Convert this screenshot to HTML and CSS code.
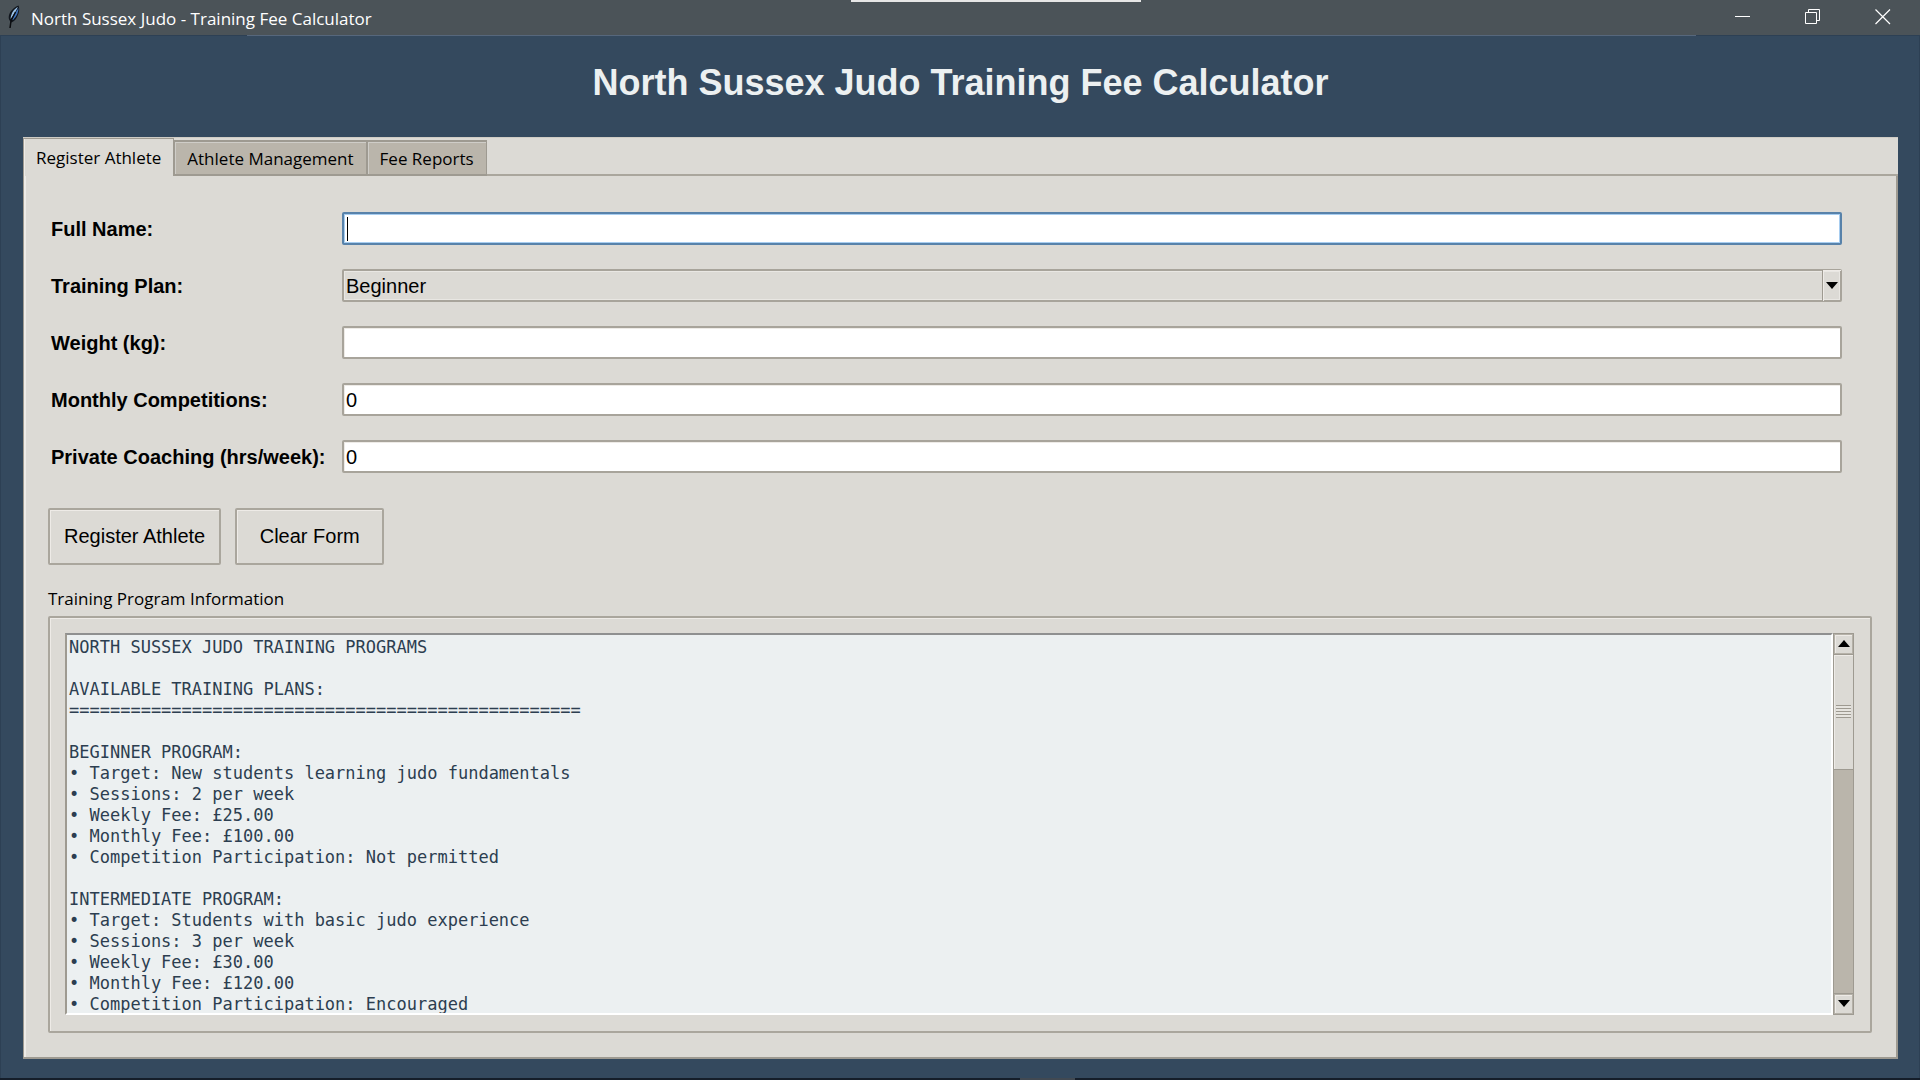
FILE: index.html
```html
<!DOCTYPE html>
<html lang="en">
<head>
<meta charset="utf-8">
<title>North Sussex Judo - Training Fee Calculator</title>
<link rel="stylesheet" href="styles.css">
</head>
<body>
<div class="window">
  <header class="titlebar">
    <span class="snap-bar"></span>
    <svg class="feather" viewBox="0 0 16 24" width="16" height="24" aria-hidden="true">
      <path d="M12.500 .5 C14 4 13 9 10.500 13 C9 15.500 7 17 5 17.500 L4 16 C1.500 13 3 8 6 5 C8 3 10 1 12.500 .5Z" fill="#10151c"/>
      <path d="M12 2 C8 4 5 8 4.500 14 L6 12 C8 9 10 6 12 2Z" fill="#9cc4ea"/>
      <path d="M12.500 3 C12.500 7 11 11 7 15 L6 15 C7.500 11 10 7 12.500 3Z" fill="#3f73bd"/>
      <path d="M9.500 7 L5 16 L4 23" fill="none" stroke="#0b0d10" stroke-width="1.500"/>
    </svg>
    <span class="window-title">North Sussex Judo - Training Fee Calculator</span>
    <div class="window-controls">
      <button type="button" class="control" aria-label="Minimize"><svg width="16" height="16" viewBox="0 0 16 16"><path d="M0 7.500H15" stroke="#fff"/></svg></button>
      <button type="button" class="control" aria-label="Restore"><svg width="16" height="16" viewBox="0 0 16 16" fill="none" stroke="#fff"><path d="M.5 3.500H11.500V14.500H.5ZM3.500 3.500V.5H14.500V11.500H11.500"/></svg></button>
      <button type="button" class="control" aria-label="Close"><svg width="16" height="16" viewBox="0 0 16 16"><path d="M.5 .5L15 15M15 .5L.5 15" stroke="#fff" stroke-width="1.200"/></svg></button>
    </div>
  </header>
  <div class="edge"></div>

  <main class="app">
    <h1 class="heading">North Sussex Judo Training Fee Calculator</h1>

    <div class="notebook">
      <div class="tabs" role="tablist">
        <button type="button" class="tab tab-active" role="tab" aria-selected="true">Register Athlete</button>
        <button type="button" class="tab" role="tab" aria-selected="false">Athlete Management</button>
        <button type="button" class="tab" role="tab" aria-selected="false">Fee Reports</button>
        <span class="tab-rest"></span>
      </div>

      <div class="page" role="tabpanel">
        <form class="form">
          <label class="label" for="name">Full Name:</label>
          <div class="control-box"><input class="field field-focus" id="name" type="text"><span class="caret"></span></div>
          <label class="label" for="plan">Training Plan:</label>
          <div class="control-box">
            <select class="field field-select" id="plan"><option>Beginner</option><option>Intermediate</option><option>Elite</option></select>
            <span class="drop"><svg width="12" height="7" viewBox="0 0 12 7"><path d="M0 0H12L6 7Z"/></svg></span>
          </div>
          <label class="label" for="weight">Weight (kg):</label>
          <div class="control-box"><input class="field" id="weight" type="text"></div>
          <label class="label" for="competitions">Monthly Competitions:</label>
          <div class="control-box"><input class="field" id="competitions" type="text" value="0"></div>
          <label class="label" for="coaching">Private Coaching (hrs/week):</label>
          <div class="control-box"><input class="field" id="coaching" type="text" value="0"></div>
        </form>

        <div class="actions">
          <button type="button" class="action">Register Athlete</button>
          <button type="button" class="action action-clear">Clear Form</button>
        </div>

        <label class="info-label" for="info">Training Program Information</label>
        <div class="info">
          <textarea class="info-text" id="info" readonly>NORTH SUSSEX JUDO TRAINING PROGRAMS

AVAILABLE TRAINING PLANS:
==================================================

BEGINNER PROGRAM:
• Target: New students learning judo fundamentals
• Sessions: 2 per week
• Weekly Fee: £25.00
• Monthly Fee: £100.00
• Competition Participation: Not permitted

INTERMEDIATE PROGRAM:
• Target: Students with basic judo experience
• Sessions: 3 per week
• Weekly Fee: £30.00
• Monthly Fee: £120.00
• Competition Participation: Encouraged</textarea>
          <div class="scrollbar">
            <button type="button" class="step" aria-label="Scroll up"><svg width="12" height="7" viewBox="0 0 12 7"><path d="M0 7H12L6 0Z"/></svg></button>
            <div class="track"><div class="thumb"><span class="grip"></span></div></div>
            <button type="button" class="step" aria-label="Scroll down"><svg width="12" height="7" viewBox="0 0 12 7"><path d="M0 0H12L6 7Z"/></svg></button>
          </div>
        </div>
      </div>
    </div>
  </main>
  <footer class="taskbar-edge"><span class="taskbar-mark"></span></footer>
</div>
</body>
</html>
```
FILE: styles.css
```css
* { box-sizing: border-box; }

body {
  margin: 0;
  background: #34495e;
  color: #000;
  font-family: "Liberation Sans", Arial, sans-serif;
  font-size: 20px;
}

button, input, select, textarea {
  margin: 0;
  font: inherit;
  color: inherit;
  border-radius: 0;
  outline: none;
}

.window {
  display: flex;
  flex-direction: column;
  height: 100vh;
  min-height: 900px;
}

/* Title bar */
.titlebar {
  position: relative;
  display: flex;
  align-items: center;
  height: 35px;
  padding: 0 2px 0 6px;
  background: #4b5358;
  color: #fff;
}
.snap-bar {
  position: absolute;
  top: 0;
  left: 851px;
  width: 290px;
  height: 2px;
  background: #e6e6e6;
}
.feather { margin-bottom: 2px; }
.window-title {
  flex: 1;
  padding: 2px 0 0 9px;
  font: 17px/24px "Open Sans", "Noto Sans", sans-serif;
}
.window-controls { display: flex; }
.control {
  display: grid;
  place-items: center;
  width: 70px;
  height: 34px;
  padding: 0 0 2px;
  border: 0;
  background: none;
}
.edge {
  height: 1px;
  background: linear-gradient(90deg, #2d4054 247px, #56677c 247px calc(100% - 224px), #2d4054 calc(100% - 224px));
}

/* Main area */
.app {
  flex: 1;
  min-height: 0;
  display: flex;
  flex-direction: column;
  padding: 0 21px 19px 22px;
  border: solid #2d4054;
  border-width: 0 1px;
}
.heading {
  margin: 0;
  padding: 27px 0 34px;
  font-size: 36px;
  line-height: 40px;
  font-weight: bold;
  text-align: center;
  color: #ecf0f1;
}

.notebook {
  flex: 1;
  min-height: 0;
  display: flex;
  flex-direction: column;
  background: #dcdad5;
}
.tabs {
  display: flex;
  align-items: flex-end;
  height: 39px;
  border-top: 1px solid #cfccc5;
}
.tab {
  height: 36px;
  padding: 1px 12px 0;
  border: 2px solid #9e9a91;
  border-left-width: 1px;
  border-right-width: 1px;
  background: #bab5ab;
  box-shadow: inset 1px 1px #cfcdc8;
  font: 17px/24px "Open Sans", "Noto Sans", sans-serif;
  white-space: nowrap;
}
.tab-active {
  height: 38px;
  border-top-width: 1px;
  border-bottom: 0;
  background: #dcdad5;
  box-shadow: inset 1px 0 #eeebe7;
}
.tab-rest {
  flex: 1;
  align-self: stretch;
  border-bottom: 2px solid #aaa69d;
}
.page {
  flex: 1;
  min-height: 0;
  display: flex;
  flex-direction: column;
  padding: 36px 24px 24px;
  border: solid #9e9a91;
  border-width: 0 2px 2px 1px;
  box-shadow: inset 2px 0 #eeebe7;
}

/* Form */
.form {
  display: grid;
  grid-template-columns: 291px 1fr;
  row-gap: 24px;
  align-items: center;
  padding: 0 30px 0 3px;
}
.label { padding-top: 2px; font-weight: bold; white-space: nowrap; }
.control-box { position: relative; height: 33px; }
.field {
  display: block;
  width: 100%;
  height: 33px;
  padding: 1px 2px 0;
  border: 2px solid #a8a49b;
  border-radius: 2px;
  background: #fff;
  box-shadow: inset 1px 1px #eeebe7;
}
.field-focus {
  border-color: #5882aa;
  box-shadow: inset 0 0 0 1px #a7cdf0;
}
.field-select {
  appearance: none;
  background: #dcdad5;
  box-shadow: inset 0 0 0 1px #e9e7e3;
}
.caret {
  position: absolute;
  left: 5px;
  top: 5px;
  width: 1px;
  height: 24px;
  background: #000;
}
.drop {
  position: absolute;
  top: 1px;
  right: 1px;
  bottom: 1px;
  width: 19px;
  display: grid;
  place-items: center;
  border-left: 1px solid #9e9a91;
  box-shadow: inset 1px 1px #eeebe7;
  pointer-events: none;
}

.actions { display: flex; gap: 14px; padding: 35px 0 22px; }
.action {
  height: 57px;
  padding: 0 14px;
  border: 2px solid #aaa69d;
  border-radius: 2px;
  background: #dcdad5;
  box-shadow: inset 1px 1px #eeebe7;
}
.action-clear { min-width: 149px; }

/* Program information */
.info-label {
  padding-bottom: 5px;
  font: 17px/24px "Open Sans", "Noto Sans", sans-serif;
}
.info {
  flex: 1;
  min-height: 0;
  display: flex;
  padding: 15px 16px 16px 15px;
  border: 2px solid #aaa69d;
  border-radius: 2px;
  box-shadow: inset 1px 1px #eeebe7;
}
.info-text {
  flex: 1;
  min-width: 0;
  padding: 2px;
  border: 2px solid;
  border-color: #8f9090 #fff #fff #9e9a91;
  background: #ecf0f1;
  color: #2c3e50;
  font: 17px/21px "DejaVu Sans Mono", monospace;
  resize: none;
  overflow: hidden;
}
.scrollbar {
  display: flex;
  flex-direction: column;
  width: 21px;
  border: 1px solid #9e9a91;
}
.step {
  display: grid;
  place-items: center;
  height: 20px;
  padding: 0 0 2px;
  border: 1px solid #b5b1a8;
  background: #dcdad5;
  box-shadow: inset 1px 1px #eeebe7;
}
.track {
  flex: 1;
  background: #bab5ab;
  border: solid #9e9a91;
  border-width: 1px 0;
}
.thumb {
  display: grid;
  place-items: center;
  height: 34%;
  border-bottom: 1px solid #9e9a91;
  background: #dcdad5;
  box-shadow: inset 1px 1px #eeebe7;
}
.grip {
  width: 15px;
  height: 13px;
  background: repeating-linear-gradient(#9e9a91 0 1px, #e6e4df 1px 3px);
}

.taskbar-edge { height: 2px; padding-left: 1020px; background: #151e2a; }
.taskbar-mark { display: block; width: 55px; height: 2px; background: #414952; }
```
